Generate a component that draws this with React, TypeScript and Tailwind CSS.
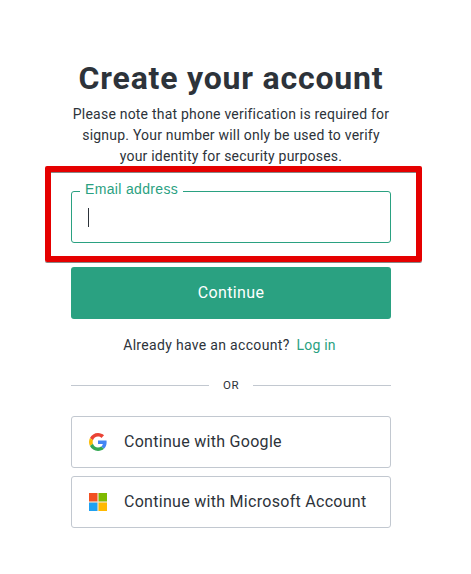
import { useState } from 'react'

function GoogleLogo() {
  return (
    <svg width="18" height="18" viewBox="0 0 48 48" aria-hidden="true">
      <path fill="#EA4335" d="M24 9.5c3.54 0 6.71 1.22 9.21 3.6l6.85-6.85C35.9 2.38 30.47 0 24 0 14.62 0 6.51 5.38 2.56 13.22l7.98 6.19C12.43 13.72 17.74 9.5 24 9.5z" />
      <path fill="#4285F4" d="M46.98 24.55c0-1.57-.15-3.09-.38-4.55H24v9.02h12.94c-.58 2.96-2.26 5.48-4.78 7.18l7.73 6c4.51-4.18 7.09-10.36 7.09-17.65z" />
      <path fill="#FBBC05" d="M10.53 28.59c-.48-1.45-.76-2.99-.76-4.59s.27-3.14.76-4.59l-7.98-6.19C.92 16.46 0 20.12 0 24c0 3.88.92 7.54 2.56 10.78l7.97-6.19z" />
      <path fill="#34A853" d="M24 48c6.48 0 11.93-2.13 15.89-5.81l-7.73-6c-2.15 1.45-4.92 2.3-8.16 2.3-6.26 0-11.57-4.22-13.47-9.91l-7.98 6.19C6.51 42.62 14.62 48 24 48z" />
    </svg>
  )
}

function MicrosoftLogo() {
  return (
    <svg width="18" height="18" viewBox="0 0 18 18" aria-hidden="true">
      <path fill="#F3E3C8" d="M0 0h18v18H0z" />
      <path fill="#F25022" d="M0 0h8.4v8.4H0z" />
      <path fill="#7FBA00" d="M9.6 0H18v8.4H9.6z" />
      <path fill="#20A1F1" d="M0 9.6h8.4V18H0z" />
      <path fill="#FFB900" d="M9.6 9.6H18V18H9.6z" />
    </svg>
  )
}

const PROVIDERS = [
  { label: 'Continue with Google', Logo: GoogleLogo },
  { label: 'Continue with Microsoft Account', Logo: MicrosoftLogo },
]

export default function App() {
  const [email, setEmail] = useState('')

  return (
    <main className="min-h-[574px] bg-white pt-14 font-['Roboto',sans-serif] text-[#2d333a]">
      <div className="ml-[71px] w-80">
        <h1 className="flex h-11 items-center justify-center whitespace-nowrap text-[32px] font-bold tracking-[0.8px]">
          Create your account
        </h1>
        <p className="mt-1 -mx-2 text-center text-sm leading-[21px] tracking-[0.21px] whitespace-nowrap">
          Please note that phone verification is required for
          <br />
          signup. Your number will only be used to verify
          <br />
          your identity for security purposes.
        </p>

        <form onSubmit={(e) => e.preventDefault()}>
          <div className="relative mt-6 h-[52px] rounded-[3px] border border-[#2aa181]">
            <label
              htmlFor="email"
              className="absolute left-2 -top-3 w-[103px] bg-white px-[5px] font-['Liberation_Sans',sans-serif] text-sm leading-[18px] tracking-[0.34px] whitespace-nowrap text-[#2aa181]"
            >
              Email address
            </label>
            <input
              id="email"
              type="text"
              value={email}
              onChange={(e) => setEmail(e.target.value)}
              className="h-full w-full px-4 text-base outline-none"
            />
            {!email && <span className="pointer-events-none absolute left-4 top-4 h-[19px] w-px bg-[#2d333a]" />}
            <div className="pointer-events-none absolute -left-[27px] -top-[26px] h-24 w-[377px] rounded-[2px] border-[6px] border-[#e50000] shadow-[0_1px_0_#888,inset_0_1px_0_#888]" />
          </div>
          <button
            type="submit"
            className="mt-6 flex h-[52px] w-full items-center justify-center rounded-[3px] bg-[#2aa181] text-base tracking-[0.38px] text-white"
          >
            Continue
          </button>
        </form>

        <p className="mt-4 flex justify-center gap-[7px] pr-[3px] text-sm leading-[21px] tracking-[0.32px]">
          <span>Already have an account?</span>
          <a href="#" className="tracking-[0.2px] text-[#2aa181]">Log in</a>
        </p>

        <div className="mt-[19px] flex h-5 items-center text-[11.5px]">
          <span className="h-px flex-1 bg-[#c2c8d0]" />
          <span className="w-11 pt-0.5 text-center tracking-[0.4px]">OR</span>
          <span className="h-px flex-1 bg-[#c2c8d0]" />
        </div>

        <div className="mt-[21px] space-y-2">
          {PROVIDERS.map(({ label, Logo }) => (
            <button
              key={label}
              type="button"
              className="flex h-[52px] w-full items-center gap-[17px] rounded-[3px] border border-[#c2c8d0] px-[17px] text-base tracking-[0.29px] whitespace-nowrap"
            >
              <Logo />
              <span>{label}</span>
            </button>
          ))}
        </div>
      </div>
    </main>
  )
}
